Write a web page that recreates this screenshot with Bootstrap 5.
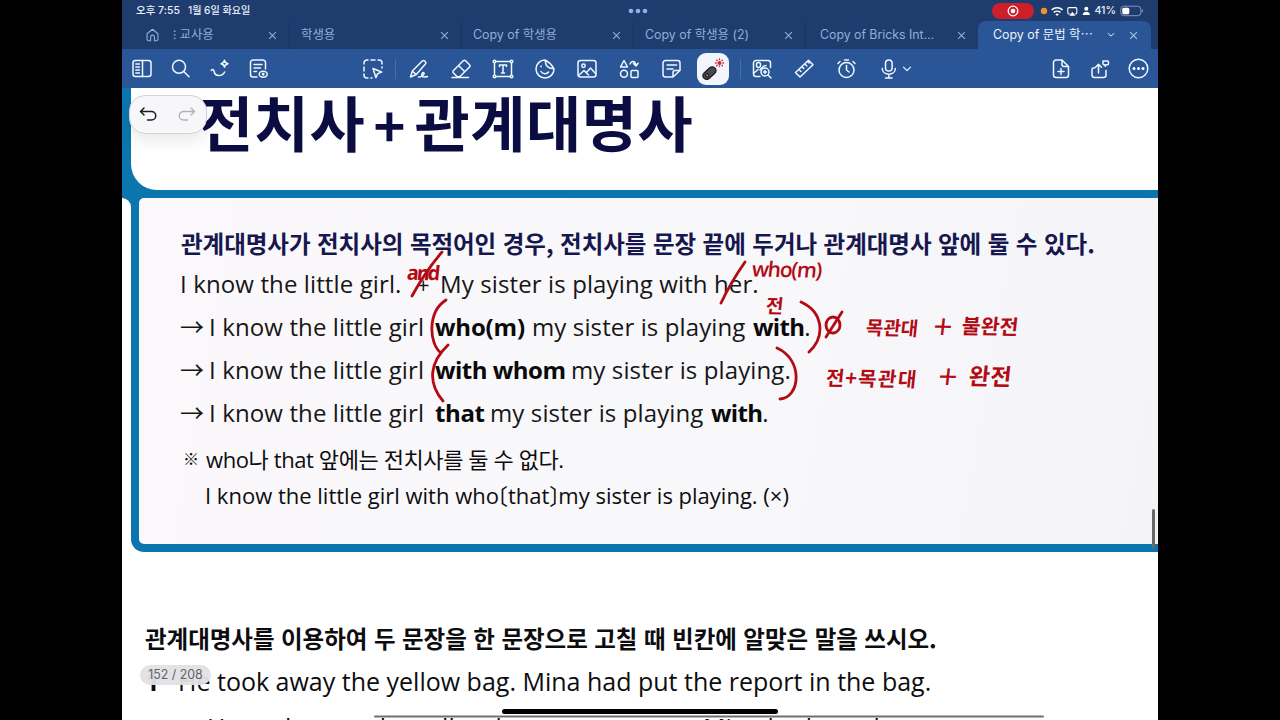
<!DOCTYPE html>
<html lang="ko">
<head>
<meta charset="utf-8">
<meta name="viewport" content="width=device-width, initial-scale=1">
<title>Notes</title>
<link href="https://cdn.jsdelivr.net/npm/bootstrap@5.3.0/dist/css/bootstrap.min.css" rel="stylesheet">
<style>
:root{--blue:#0b76ad;--bar:#2a5596;--head:#1e3c6d;--ink:#b20b14}
body{background:#000;height:720px;overflow:hidden;font-family:"Open Sans","Noto Sans CJK KR",sans-serif;color:#0d0d0f}
.tablet{width:1036px;height:720px;margin-left:122px;background:#fff;overflow:hidden}
.ui{font-family:Inter,"Noto Sans CJK KR",sans-serif}
svg{display:block;flex:none}
.ic{fill:none;stroke:#eef8ff;stroke-width:1.5;stroke-linecap:round;stroke-linejoin:round}
/* status bar and tabs */
.status{height:21px;background:var(--head);color:#e8effa;font-size:10.6px;font-weight:500;padding:0 14px;line-height:21px}
.rec{width:42px;height:16px;background:#cd1f2a}
.tabs{height:28px;background:var(--head);color:#8faedb;font-size:12.4px;line-height:28px}
.home{width:50px;padding-left:24px}
.tabx{width:172px;padding:0 12px 0 11px;border-right:1px solid #183462;white-space:nowrap}
.tabx:nth-child(2){width:118px;padding-left:1px}
.tabx.on{background:var(--bar);color:#e9f3ff;border:0;border-radius:8px 8px 0 0;padding:0 13px 0 15px;width:173px}
.tools{height:39px;background:var(--bar)}
.tl{width:39px}.tm{width:42px}
.pen-on{width:32px;height:32px;border-radius:9px;background:#f3f5fc}
.sep{width:1px;height:20px;background:#47709f}
/* page */
.titlebox{height:110px;background:var(--blue);padding-left:9px}
.titlein{height:102px;background:#fff;border-bottom-left-radius:26px;padding-left:67px}
.title{font:700 60px/66px "Noto Sans CJK KR",sans-serif;letter-spacing:.6px;color:#0b0c42;white-space:nowrap}
.panelwrap{height:354px;background:linear-gradient(var(--blue) 0 20px,#fff 20px)}
.gutter{width:9px;background:#fff;border-top-right-radius:12px}
.panelx{border:solid var(--blue);border-width:0 0 8px 8px;border-bottom-left-radius:13px;background:var(--blue)}
.panelin{height:346px;background:linear-gradient(100deg,#faf8fa,#f8f7fa 60%,#f4f3f7);border-radius:5px 0 0 5px;padding:25px 0 0 41px}
.ln{height:43px;line-height:42px;font-size:24px;white-space:nowrap;color:#161617;letter-spacing:.12px}
.ln b{color:#0a0a0b}
.rule{font:700 23.5px/41px "Noto Sans CJK KR",sans-serif;letter-spacing:-.04px;color:#17174f;height:40px}
.ar{width:29px}
.nt{font-size:22px;white-space:nowrap}
.br{display:inline-block;width:9px}
.ask{font:700 23.5px/35px "Noto Sans CJK KR",sans-serif;height:36px;letter-spacing:-.04px;white-space:nowrap}
.q{font-size:25px;line-height:48px;height:46px;white-space:nowrap}
/* things floating over the page */
.undo{left:129px;top:95px;width:78px;height:39px;border-radius:16px;background:#f7f6f9;border:1px solid #d4d2d8;box-shadow:0 8px 14px rgba(0,0,0,.08)}
.pg{left:140px;top:665px;width:71px;height:20px;border-radius:10px;background:rgba(226,225,228,.96);color:#626268;font-size:12.4px;line-height:20px}
.homebar{left:502px;top:709px;width:276px;height:5px;border-radius:3px;background:#000}
.scroll{left:1152px;top:509px;width:3px;height:40px;border-radius:2px;background:#67666b}
.ink{left:0;top:0}
.hand{position:absolute;color:var(--ink);font:700 19px/24px "Noto Sans CJK KR",sans-serif;white-space:nowrap;transform:skewX(-5deg) rotate(1deg)}
.plus{font-weight:400;font-size:33px}
.lat{font-family:"Open Sans",sans-serif;font-weight:700}
</style>
</head>
<body class="position-relative">
<svg width="0" height="0" class="position-absolute"><defs>
<symbol id="x" viewBox="0 0 8 8"><path d="M1 1l6 6M7 1L1 7" fill="none" stroke="currentColor" stroke-width="1"/></symbol>
</defs></svg>
<div class="tablet d-flex flex-column">
  <div class="status ui d-flex align-items-center flex-shrink-0">
    <span style="font-size:10.5px">오후 7:55</span><span class="ms-2" style="font-size:10.1px">1월 6일 화요일</span>
    <svg class="me-auto" width="20" height="6" style="margin-left:378px" fill="#8fb2e8"><circle cx="3" cy="3" r="2.3"/><circle cx="10" cy="3" r="2.3"/><circle cx="17" cy="3" r="2.3"/></svg>
    <span class="rec rounded-pill d-flex align-items-center justify-content-center"><svg width="12" height="12"><circle cx="6" cy="6" r="4.8" fill="none" stroke="#fff" stroke-width="1.3"/><circle cx="6" cy="6" r="2.3" fill="#fff"/></svg></span>
    <svg width="51" height="14" style="margin-left:5px" viewBox="0 0 51 14">
      <circle cx="5" cy="7" r="3.2" fill="#ef912c"/>
      <g fill="none" stroke="#fff" stroke-width="1.600"><path d="M12.600 6a8 8 0 0 1 11 0M14.800 8.500a4.900 4.900 0 0 1 6.600 0"/></g><path d="M16.400 10.200a2.600 2.600 0 0 1 3.500 0L18.100 12z" fill="#fff"/>
      <path d="M31 10h-1a1.200 1.200 0 0 1-1.200-1.200v-4A1.200 1.200 0 0 1 30 3.600h6.600a1.200 1.200 0 0 1 1.200 1.200v4A1.200 1.200 0 0 1 36.600 10h-1" fill="none" stroke="#fff" stroke-width="1.100"/><path d="M33.300 7.800l3 4h-6z" fill="#fff"/>
      <circle cx="47.300" cy="4.800" r="2" fill="#fff"/><path d="M43.700 11c0-4.400 7.200-4.400 7.200 0z" fill="#fff"/>
    </svg>
    <span class="ms-1">41%</span>
    <svg class="ms-1" width="24" height="12"><rect x=".8" y="1.200" width="20" height="9.500" rx="3" fill="none" stroke="#8297b8"/><rect x="2.300" y="2.700" width="7" height="6.500" rx="1.500" fill="#fff"/><path d="M22.300 4.500v3" stroke="#8297b8" stroke-width="1.200"/></svg>
  </div>
  <div class="tabs ui d-flex flex-shrink-0">
    <div class="home d-flex align-items-center"><svg width="13" height="14" viewBox="0 0 13 14" fill="none" stroke="currentColor" stroke-width="1.100"><path d="M1 5.700L6.500 1.200 12 5.700V11a1.700 1.700 0 0 1-1.700 1.700H8.400V9a1.900 1.900 0 0 0-3.800 0v3.700H2.700A1.700 1.700 0 0 1 1 11z" stroke-linejoin="round"/></svg></div>
    <div class="tabx d-flex align-items-center justify-content-between"><span>⁝ 교사용</span><svg width="9" height="9"><use href="#x"/></svg></div>
    <div class="tabx d-flex align-items-center justify-content-between"><span>학생용</span><svg width="9" height="9"><use href="#x"/></svg></div>
    <div class="tabx d-flex align-items-center justify-content-between"><span>Copy of 학생용</span><svg width="9" height="9"><use href="#x"/></svg></div>
    <div class="tabx d-flex align-items-center justify-content-between"><span>Copy of 학생용 (2)</span><svg width="9" height="9"><use href="#x"/></svg></div>
    <div class="tabx d-flex align-items-center justify-content-between border-0"><span style="padding-left:3px;letter-spacing:-.05px">Copy of Bricks Int...</span><svg width="9" height="9"><use href="#x"/></svg></div>
    <div class="tabx on d-flex align-items-center justify-content-between"><span>Copy of 문법 학⋯</span><svg width="8" height="6" fill="none" stroke="currentColor" style="margin-right:-6px"><path d="M1 1.200l3 3 3-3"/></svg><svg width="9" height="9" style="margin-left:5px;color:#a9c4ec"><use href="#x"/></svg></div>
  </div>
  <div class="tools d-flex align-items-center flex-shrink-0">
    <div class="tl d-flex justify-content-center"><svg class="ic" width="20" height="20"><rect x="1" y="1.500" width="18" height="16" rx="2.500"/><path d="M10.500 1.500v16M3.800 5h3.600M3.800 8h3.600M3.800 11h3.600M3.800 14h3.600"/></svg></div>
    <div class="tl d-flex justify-content-center"><svg class="ic" width="20" height="20"><circle cx="8" cy="7.800" r="6.500"/><path d="M12.700 12.500l5.300 5.300"/></svg></div>
    <div class="tl d-flex justify-content-center"><svg class="ic" width="20" height="20"><path d="M1.200 11.500c1.300-1.500 2.800-1 2.900 1 1 5.500 8.300 5 10.600.5M14.500 1.200q.5 3 3.500 3.500-3 .5-3.500 3.500-.5-3-3.500-3.500 3-.5 3.500-3.500z"/></svg></div>
    <div class="tl d-flex justify-content-center"><svg class="ic" width="20" height="20"><path d="M8 18H4A2.500 2.500 0 0 1 1.500 15.500V3.500A2.500 2.500 0 0 1 4 1h10a2.500 2.500 0 0 1 2.500 2.500V10M5 5.500h8M5 9h6.500M5 12.500h2.500"/><ellipse cx="14.200" cy="15.300" rx="4" ry="3"/><circle cx="14.200" cy="15.300" r=".7"/></svg></div>
    <div class="tm d-flex justify-content-center" style="margin-left:74px"><svg class="ic" width="20" height="20"><path d="M1 5V4a3 3 0 0 1 3-3h1M8 1h4M15 1h1a3 3 0 0 1 3 3v1M1 8v4M1 15v1a3 3 0 0 0 3 3h1M19 8v1M8 19h1M10 9.500l8.700 3.500-4 1.600-1.800 4z"/></svg></div>
    <div class="sep" style="margin-left:1px;margin-right:2px"></div>
    <div class="tm d-flex justify-content-center"><svg class="ic" width="20" height="20"><path d="M1.500 18l1.800-6L13 2.200a2.200 2.200 0 0 1 3.200 3L7.200 15.500zM3.300 12l3.900 3.500M9.500 18c3 .5 6-2.500 5.500-4-.8-1.500-3 1-2 3 .7 1.200 2.500 1.300 5.500.5"/></svg></div>
    <div class="tm d-flex justify-content-center"><svg class="ic" width="20" height="20"><path d="M2.500 11.500L12 2a2 2 0 0 1 2.800 0l3.500 3.500a2 2 0 0 1 0 2.800L9.500 17a3 3 0 0 1-4 0l-3-3a1.700 1.700 0 0 1 0-2.500zM7.500 6.500l6.300 6.300M1 18.500h16.500"/></svg></div>
    <div class="tm d-flex justify-content-center"><svg class="ic" width="22" height="20"><path d="M4.500 2.500h13M4.500 17.500h13M2.500 4.500v11M19.500 4.500v11"/><circle cx="2.500" cy="2.500" r="1.300"/><circle cx="19.500" cy="2.500" r="1.300"/><circle cx="2.500" cy="17.500" r="1.300"/><circle cx="19.500" cy="17.500" r="1.300"/><path d="M7.500 7.500V6h7v1.500M11 6v8M9.500 14h3"/></svg></div>
    <div class="tm d-flex justify-content-center"><svg class="ic" width="20" height="20"><path d="M10 1a9 9 0 1 0 9 9C17 6 14 3 10 1zM10.500 1.500c-.5 5 3 8.500 8 8M6 12.500c1.500 2.800 6 2.800 7.500.5M6 7v.8"/></svg></div>
    <div class="tm d-flex justify-content-center"><svg class="ic" width="20" height="20"><rect x="1" y="1.500" width="18" height="16.500" rx="2.500"/><circle cx="6.500" cy="6.700" r="1.700"/><path d="M1.500 16.500l5.500-5 4.500 4.500M9.500 13.500l4-4.500 5 5.500"/></svg></div>
    <div class="tm d-flex justify-content-center"><svg class="ic" width="20" height="20"><path d="M5 1.500L8.500 8h-7zM11 5c1.500-3.500 5-3.500 6 1M14.500 4.500L17 7l2-2.800"/><circle cx="5" cy="14.800" r="3.500"/><rect x="12" y="11.500" width="7" height="7" rx="1"/></svg></div>
    <div class="tm d-flex justify-content-center"><svg class="ic" width="20" height="20"><path d="M12 18H4.500A2.500 2.500 0 0 1 2 15.500V4A2.500 2.500 0 0 1 4.500 1.500h12A2.500 2.500 0 0 1 19 4v7.500zM12 18v-4.500a2 2 0 0 1 2-2h5M6 6h9.500M6 10h6"/></svg></div>
    <div class="tm d-flex justify-content-center"><div class="pen-on"><svg width="32" height="32"><g transform="rotate(-42 13 20)"><rect x="5" y="16" width="15" height="7.500" rx="3.700" fill="#4a484e" stroke="#17171a" stroke-width="1.200"/><circle cx="9.300" cy="19.800" r="1.600" fill="#8a888c" stroke="#17171a"/></g><g stroke="#cb2638" stroke-width="1.400" stroke-linecap="round"><path d="M22.500 6v.6M22.500 13v.6M18.500 10h.6M26 10h.6M19.700 7.200l.4.400M25 12.300l.4.400M25.400 7.200l-.4.400M20.100 12.300l-.4.400"/></g><circle cx="22.500" cy="10" r="2" fill="#cb2638"/></svg></div></div>
    <div class="sep" style="margin:0 0 0 6px"></div>
    <div class="tm d-flex justify-content-center"><svg class="ic" width="20" height="20"><path d="M8 17.500H4A2.500 2.500 0 0 1 1.500 15V4A2.500 2.500 0 0 1 4 1.500h12A2.500 2.500 0 0 1 18.500 4v4.500M2 14l4-3.500"/><rect x="4.500" y="3.500" width="4" height="5" rx="2"/><path d="M8 11c2-2.500 3-4.500 6-4.500"/><circle cx="13" cy="13" r="4"/><path d="M16 16l3 3M11.500 13h3M13 11.500v3"/></svg></div>
    <div class="tm d-flex justify-content-center"><svg class="ic" width="20" height="20"><path d="M1.500 13.500L14.500 1.200 19 5.700 6 18zM5 10.500l2 2M8 7.700l1.700 1.700M10.800 5l2 2M13.500 2.500l1.500 1.500"/></svg></div>
    <div class="tm d-flex justify-content-center"><svg class="ic" width="20" height="20"><circle cx="10.500" cy="11" r="7.500"/><path d="M10.500 6.500V11l2.500 2M8.500 1h4M2 4.500l2-2M19 4.500l-2-2"/></svg></div>
    <div class="tm d-flex justify-content-center"><svg class="ic" width="20" height="20"><rect x="7.500" y="1" width="6.600" height="11" rx="3.300"/><path d="M4.300 9.500c0 7.500 13 7.500 13 0M10.800 15.500V19M7.500 19h6.600"/></svg></div>
    <svg class="ic" width="10" height="8" style="margin-left:-7px;stroke-width:1.200"><path d="M1.500 2.200L5 5.700l3.500-3.500"/></svg>
    <div class="tl d-flex justify-content-center ms-auto"><svg class="ic" width="20" height="20"><path d="M11 1H5a2.500 2.500 0 0 0-2.500 2.500v12.500A2.500 2.500 0 0 0 5 18.500h10a2.500 2.500 0 0 0 2.500-2.500V7.500zM11 1v4.500a2 2 0 0 0 2 2h4.500M10 9.500v6M7 12.500h6"/></svg></div>
    <div class="tl d-flex justify-content-center"><svg class="ic" width="20" height="20"><path d="M4.500 9H3a1 1 0 0 0-1 1v6a2.500 2.500 0 0 0 2.500 2.500h9A2.500 2.500 0 0 0 16 16v-4.500M8.500 14V5.500M5.500 8.300l3-3 3 3M13 2h4.500a1 1 0 0 1 1 1v1.800a1 1 0 0 1-1 1h-1l-1.300 1.400v-1.400H14a1 1 0 0 1-1-1z"/></svg></div>
    <div class="tl d-flex justify-content-center"><svg class="ic" width="21" height="21"><circle cx="10.500" cy="10.500" r="9.300"/><g fill="#fff" stroke="none"><circle cx="6" cy="10.500" r="1.500"/><circle cx="10.500" cy="10.500" r="1.500"/><circle cx="15" cy="10.500" r="1.500"/></g></svg></div>
  </div>

  <div class="titlebox flex-shrink-0"><div class="titlein"><div class="title">전치사<span class="d-inline-block" style="width:49px;padding-left:8px;font-size:54px;line-height:1">+</span>관계대명사</div></div></div>
  <div class="panelwrap d-flex flex-shrink-0">
    <div class="gutter"></div>
    <div class="panelx flex-grow-1">
      <div class="panelin">
        <div class="ln rule" style="margin-left:1px">관계대명사가 전치사의 목적어인 경우, 전치사를 문장 끝에 두거나 관계대명사 앞에 둘 수 있다.</div>
        <div class="ln d-flex"><span style="width:237px">I know the little girl.</span><span style="width:23px;font-size:22px">+</span><span>My sister is playing with her.</span></div>
        <div class="ln d-flex"><span class="ar">→</span><span style="width:226px">I know the little girl</span><b style="width:97px;letter-spacing:-.2px">who(m)</b><span style="width:221px">my sister is playing</span><b style="letter-spacing:-.7px">with</b><span>.</span></div>
        <div class="ln d-flex"><span class="ar">→</span><span style="width:226px">I know the little girl</span><b style="width:136px;letter-spacing:-.5px">with whom</b><span>my sister is playing.</span></div>
        <div class="ln d-flex"><span class="ar">→</span><span style="width:226px">I know the little girl</span><b style="width:55px;letter-spacing:-.4px">that</b><span style="width:221px">my sister is playing</span><b style="letter-spacing:-.7px">with</b><span>.</span></div>
        <div class="nt d-flex" style="height:43px;line-height:48px;letter-spacing:-.4px"><span style="width:26px;font-size:16px;padding-left:3px">※</span><span>who나 that 앞에는 전치사를 둘 수 없다.</span></div>
        <div class="nt" style="line-height:34px;padding-left:25px">I know the little girl with who<span class="br" style="text-indent:-13px">〔</span>that<span class="br">〕</span>my sister is playing. (×)</div>
      </div>
    </div>
  </div>
  <div class="flex-shrink-0" style="padding:69px 0 0 23px">
    <div class="ask">관계대명사를 이용하여 두 문장을 한 문장으로 고칠 때 빈칸에 알맞은 말을 쓰시오.</div>
    <div class="q d-flex"><b style="width:33px">1</b><span>He took away the yellow bag. Mina had put the report in the bag.</span></div>
    <div class="q d-flex"><span style="width:28px;margin-left:34px">→</span><span style="width:496px">He took away the yellow bag</span><span>Mina had put the report</span></div>
  </div>
</div>

<svg class="ink position-absolute" width="1280" height="720" fill="none" stroke="#b20b14" stroke-width="2.800" stroke-linecap="round">
  <path d="M442 252Q425 272 412 296M745 262Q731 282 721 303"/>
  <path d="M446 300C427 312 429 344 441 353M448 345C430 362 427 382 443 401M801 302C823 312 826 336 809 352M777 348C804 360 800 398 780 399"/>
  <ellipse cx="833" cy="325" rx="7" ry="8"/><path d="M842 312L826 337"/>
  <path d="M375 716.500H1043" stroke="#6f6f73" stroke-width="2"/>
</svg>
<span class="hand lat" style="left:407px;top:261px;font-size:20px;letter-spacing:-2.200px">and</span>
<span class="hand lat" style="left:752px;top:257px;font-size:21px;font-weight:600;letter-spacing:-1.200px">who(m)</span>
<span class="hand" style="left:766px;top:293px">전</span>
<span class="hand" style="left:866px;top:315px">목관대</span>
<span class="hand plus" style="left:934px;top:313px">+</span>
<span class="hand" style="left:962px;top:313px;font-size:20.5px">불완전</span>
<span class="hand" style="left:826px;top:366px;font-size:20px">전<span style="margin:0 1px">+</span><span style="letter-spacing:1.500px">목관대</span></span>
<span class="hand plus" style="left:939px;top:363px">+</span>
<span class="hand" style="left:969px;top:363px;font-size:23px;letter-spacing:.4px">완전</span>

<div class="undo position-absolute d-flex align-items-center justify-content-between px-2">
  <svg width="22" height="20" viewBox="0 0 22 20" fill="none" stroke="#1b1b1d" stroke-width="1.500" stroke-linecap="round" stroke-linejoin="round"><path d="M6 3L2.500 6.500 6 10M2.500 6.500h11a4 4 0 0 1 0 8.500h-4"/></svg>
  <svg width="22" height="20" viewBox="0 0 22 20" fill="none" stroke="#b3b2b7" stroke-width="1.300" stroke-linecap="round" stroke-linejoin="round"><path d="M15 3l3.500 3.500L15 10M18.500 6.500h-11a4 4 0 0 0 0 8.500h4"/></svg>
</div>
<div class="pg ui position-absolute text-center">152 / 208</div>
<div class="scroll position-absolute"></div>
<div class="homebar position-absolute"></div>
<script src="https://cdn.jsdelivr.net/npm/bootstrap@5.3.0/dist/js/bootstrap.bundle.min.js"></script>
</body>
</html>
